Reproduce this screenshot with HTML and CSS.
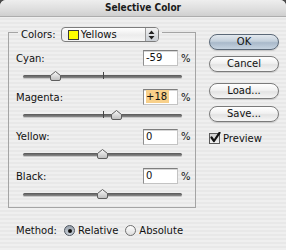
FILE: index.html
```html
<!DOCTYPE html>
<html>
<head>
<meta charset="utf-8">
<link rel="stylesheet" href="styles.css">
</head>
<body>
<div class="window">
  <div class="titlebar">Selective Color</div>
  <div class="main">
    <div class="left">
      <fieldset class="group">
        <legend class="legend">
          <div class="group-head">
            <span class="lbl">Colors:</span>
            <span class="popup">
              <span class="swatch"></span>
              <span class="popup-text">Yellows</span>
              <span class="stepper"><svg width="7" height="10" viewBox="0 0 7 10"><path d="M3.5 0.5 L6.5 4 H0.5 Z M3.5 9.5 L6.5 6 H0.5 Z" fill="#222"/></svg></span>
            </span>
          </div>
        </legend>
        <div class="channels">
          <div class="channel">
            <div class="ch-row"><span class="lbl">Cyan:</span><span class="field">-59</span><span class="pct">%</span></div>
            <div class="slider"><div class="track"><span class="tick"></span><span class="thumb" style="left:20.5%"><svg width="11" height="10" viewBox="0 0 11 10"><defs><linearGradient id="tg1" x1="0" y1="0" x2="0" y2="1"><stop offset="0" stop-color="#fafafa"/><stop offset="1" stop-color="#bdbdbd"/></linearGradient></defs><path d="M5.5 0.5 L10.5 4.5 V8 Q10.5 9.5 9 9.5 H2 Q0.5 9.5 0.5 8 V4.5 Z" fill="url(#tg1)" stroke="#5e5e5e"/></svg></span></div></div>
          </div>
          <div class="channel">
            <div class="ch-row"><span class="lbl">Magenta:</span><span class="field"><span class="sel">+18</span></span><span class="pct">%</span></div>
            <div class="slider"><div class="track"><span class="tick"></span><span class="thumb" style="left:59%"><svg width="11" height="10" viewBox="0 0 11 10"><path d="M5.5 0.5 L10.5 4.5 V8 Q10.5 9.5 9 9.5 H2 Q0.5 9.5 0.5 8 V4.5 Z" fill="url(#tg1)" stroke="#5e5e5e"/></svg></span></div></div>
          </div>
          <div class="channel">
            <div class="ch-row"><span class="lbl">Yellow:</span><span class="field">0</span><span class="pct">%</span></div>
            <div class="slider"><div class="track"><span class="tick"></span><span class="thumb" style="left:50%"><svg width="11" height="10" viewBox="0 0 11 10"><path d="M5.5 0.5 L10.5 4.5 V8 Q10.5 9.5 9 9.5 H2 Q0.5 9.5 0.5 8 V4.5 Z" fill="url(#tg1)" stroke="#5e5e5e"/></svg></span></div></div>
          </div>
          <div class="channel">
            <div class="ch-row"><span class="lbl">Black:</span><span class="field">0</span><span class="pct">%</span></div>
            <div class="slider"><div class="track"><span class="tick"></span><span class="thumb" style="left:50%"><svg width="11" height="10" viewBox="0 0 11 10"><path d="M5.5 0.5 L10.5 4.5 V8 Q10.5 9.5 9 9.5 H2 Q0.5 9.5 0.5 8 V4.5 Z" fill="url(#tg1)" stroke="#5e5e5e"/></svg></span></div></div>
          </div>
        </div>
      </fieldset>
      <div class="method">
        <span class="lbl method-lbl">Method:</span>
        <span class="radio on"><span class="dot"></span></span><span class="radio-lbl">Relative</span>
        <span class="radio"></span><span class="radio-lbl">Absolute</span>
      </div>
    </div>
    <div class="right">
      <div class="btn default">OK</div>
      <div class="btn b-cancel">Cancel</div>
      <div class="btn b-load">Load...</div>
      <div class="btn b-save">Save...</div>
      <div class="check-row">
        <span class="checkbox"><svg width="12" height="12" viewBox="0 0 12 12"><path d="M2.5 5.5 L5 9 L10.5 0.8" fill="none" stroke="#111" stroke-width="2.2" stroke-linecap="round" stroke-linejoin="round"/></svg></span>
        <span class="check-lbl">Preview</span>
      </div>
    </div>
  </div>
</div>
</body>
</html>
```

FILE: styles.css
```css
html, body {
  margin: 0;
  padding: 0;
  background: #4a4a4a;
}

body {
  font-family: "DejaVu Sans", "Liberation Sans", sans-serif;
  font-size: 10px;
  color: #111;
}

.window {
  width: 286px;
  height: 250px;
  overflow: hidden;
  border-radius: 6px 6px 0 0;
  background: repeating-linear-gradient(to bottom, #efefef 0, #efefef 2px, #e8e8e8 2px, #e8e8e8 4px);
}

.titlebar {
  height: 16px;
  line-height: 16px;
  text-align: center;
  font-family: "DejaVu Sans Condensed", "DejaVu Sans", sans-serif;
  font-weight: bold;
  font-size: 10px;
  color: #1a1a1a;
  background: linear-gradient(to bottom, #eeeeee, #dddddd 60%, #cfcfcf);
  border-bottom: 1px solid #adadad;
}

.main {
  display: flex;
}

.left {
  padding-top: 6px;
  margin-left: 8px;
  width: 188px;
}

.group {
  margin: 0;
  padding: 8px 5px 3px 7px;
  min-inline-size: 0;
  border: 1px solid #a4a4a4;
  box-sizing: border-box;
  width: 188px;
}

.legend {
  margin-left: 2px;
  padding: 4px 3px 0 3px;
}

.group-head {
  display: flex;
  align-items: center;
  height: 15px;
}

.lbl {
  white-space: nowrap;
}

.popup {
  margin-left: 5px;
  width: 98px;
  height: 15px;
  box-sizing: border-box;
  border: 1px solid #7d7d7d;
  border-radius: 4px;
  background: linear-gradient(to bottom, #ffffff, #ececec 55%, #f6f6f6);
  display: flex;
  align-items: center;
  padding-left: 6px;
}

.swatch {
  width: 11px;
  height: 10px;
  box-sizing: border-box;
  background: #ffff00;
  border: 1px solid #3a3a3a;
}

.popup-text {
  margin-left: 2px;
  flex: 1;
}

.stepper {
  width: 13px;
  height: 13px;
  box-sizing: border-box;
  border-left: 1px solid #9a9a9a;
  border-radius: 0 3px 3px 0;
  background: linear-gradient(to bottom, #f2f2f2, #c9ced4);
  display: flex;
  align-items: center;
  justify-content: center;
}

.channels {
  display: flex;
  flex-direction: column;
  gap: 3.4px;
}

.channel {
  height: 36px;
}

.ch-row {
  display: flex;
  align-items: center;
  height: 16px;
}

.ch-row .lbl {
  flex: 1;
}

.field {
  width: 35px;
  height: 16px;
  box-sizing: border-box;
  background: #fff;
  border: 1px solid #c3c3c3;
  border-top-color: #7e7e7e;
  border-left-color: #8e8e8e;
  box-shadow: inset 0 1px 0 #d6d6d6;
  padding-left: 2px;
  line-height: 14px;
}

.sel {
  display: inline-block;
  background: #f8d08a;
  line-height: 13px;
  padding-right: 2px;
}

.pct {
  width: 9px;
  margin-left: 3px;
}

.slider {
  height: 20px;
  display: flex;
  align-items: center;
  padding: 0 8px 0 7px;
}

.track {
  position: relative;
  flex: 1;
  height: 3px;
  border-radius: 2px;
  background: linear-gradient(to bottom, #555, #8a8a8a);
  box-shadow: 0 1px 0 #c8c8c8;
}

.tick {
  position: absolute;
  left: 50%;
  top: -3px;
  width: 1px;
  height: 7px;
  background: #444;
}

.thumb {
  position: absolute;
  top: -4px;
  margin-left: -5.5px;
  width: 11px;
  height: 10px;
  line-height: 0;
}

.method {
  margin-top: 15px;
  padding-left: 8px;
  display: flex;
  align-items: center;
  height: 15px;
}

.method-lbl {
  width: 48px;
}

.radio {
  width: 11px;
  height: 11px;
  box-sizing: border-box;
  border-radius: 50%;
  border: 1px solid #6f6f6f;
  background: linear-gradient(to bottom, #fdfdfd, #dedede);
  display: flex;
  align-items: center;
  justify-content: center;
}

.radio.on {
  background: linear-gradient(to bottom, #9aa3ad, #c9d0d8);
  border-color: #4d5560;
}

.dot {
  width: 4px;
  height: 4px;
  border-radius: 50%;
  background: #111;
}

.radio-lbl {
  margin-left: 3px;
  margin-right: 7px;
}

.right {
  margin-left: 13px;
  padding-top: 17px;
  width: 70px;
  display: flex;
  flex-direction: column;
}

.btn {
  height: 16px;
  box-sizing: border-box;
  border: 1px solid #7a7a7a;
  border-radius: 8px;
  background: linear-gradient(to bottom, #ffffff, #f1f1f1 45%, #e3e3e3 55%, #f5f5f5);
  text-align: center;
  line-height: 14px;
  box-shadow: 0 1px 1px rgba(0,0,0,0.15);
}

.btn.default {
  border-color: #5b6877;
  background: linear-gradient(to bottom, #e3e9ef, #c3cfdb 45%, #a9b9ca 55%, #c6d3e0);
}

.b-cancel { margin-top: 6px; }
.b-load { margin-top: 11px; }
.b-save { margin-top: 7px; }

.check-row {
  margin-top: 11px;
  display: flex;
  align-items: center;
  height: 11px;
}

.checkbox {
  position: relative;
  width: 11px;
  height: 11px;
  box-sizing: border-box;
  border: 1px solid #5a5a5a;
  background: linear-gradient(to bottom, #d0d0d0, #f2f2f2);
  line-height: 0;
}

.checkbox svg {
  position: absolute;
  left: -1px;
  top: -2px;
}

.check-lbl {
  margin-left: 3px;
}
```
